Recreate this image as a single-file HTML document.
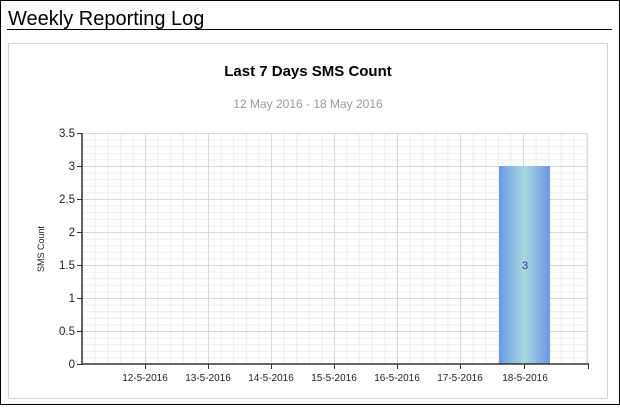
<!DOCTYPE html>
<html><head><style>
html,body{margin:0;padding:0;}
body{width:620px;height:405px;overflow:hidden;background:#fff;font-family:"Liberation Sans",Arial,sans-serif;}
</style></head><body>
<svg width="620" height="405" xmlns="http://www.w3.org/2000/svg" font-family="Liberation Sans, Arial, sans-serif">
<defs>
<pattern id="minor" x="82" y="133" width="12.6" height="6.6" patternUnits="userSpaceOnUse">
<path d="M0 0.5H12.6M0.5 0V6.6" stroke="#ececec" stroke-width="1" fill="none"/>
</pattern>
<linearGradient id="bar" x1="0" x2="1" y1="0" y2="0">
<stop offset="0" stop-color="#6a98e6"/>
<stop offset="0.5" stop-color="#a9d8e0"/>
<stop offset="1" stop-color="#6a98e6"/>
</linearGradient>
</defs>
<rect x="0.5" y="0.5" width="619" height="404" fill="#fff" stroke="#000"/>
<text x="8" y="25" font-size="20" fill="#000">Weekly Reporting Log</text>
<line x1="7" y1="29.5" x2="612" y2="29.5" stroke="#000"/>
<rect x="8.5" y="43.5" width="599" height="355" fill="#fff" stroke="#d0d0d0"/>
<text x="308" y="76" font-size="15" font-weight="bold" text-anchor="middle" fill="#000">Last 7 Days SMS Count</text>
<text x="308" y="108" font-size="12" text-anchor="middle" fill="#999">12 May 2016 - 18 May 2016</text>
<rect x="82" y="133" width="506" height="231" fill="url(#minor)"/>
<g stroke="#d8d8d8">
<line x1="82" y1="166.5" x2="588" y2="166.5"/><line x1="82" y1="199.5" x2="588" y2="199.5"/>
<line x1="82" y1="232.5" x2="588" y2="232.5"/><line x1="82" y1="265.5" x2="588" y2="265.5"/>
<line x1="82" y1="298.5" x2="588" y2="298.5"/><line x1="82" y1="331.5" x2="588" y2="331.5"/>
<line x1="82" y1="133.5" x2="588" y2="133.5"/><line x1="82" y1="232.5" x2="588" y2="232.5"/>
<line x1="145.5" y1="133" x2="145.5" y2="364"/><line x1="208.5" y1="133" x2="208.5" y2="364"/>
<line x1="271.5" y1="133" x2="271.5" y2="364"/><line x1="334.5" y1="133" x2="334.5" y2="364"/>
<line x1="397.5" y1="133" x2="397.5" y2="364"/><line x1="460.5" y1="133" x2="460.5" y2="364"/>
<line x1="523.5" y1="133" x2="523.5" y2="364"/><line x1="587.5" y1="133" x2="587.5" y2="364"/>
</g>
<rect x="499" y="166" width="51" height="198" fill="url(#bar)"/>
<text x="525" y="269" font-size="11" text-anchor="middle" fill="#3b2a8a">3</text>
<g stroke="#333" stroke-width="1.5">
<line x1="82" y1="133" x2="82" y2="365"/>
<line x1="82" y1="364" x2="589" y2="364"/>
</g>
<g stroke="#333">
<line x1="77" y1="133.5" x2="82" y2="133.5"/><line x1="77" y1="166.5" x2="82" y2="166.5"/>
<line x1="77" y1="199.5" x2="82" y2="199.5"/><line x1="77" y1="232.5" x2="82" y2="232.5"/>
<line x1="77" y1="265.5" x2="82" y2="265.5"/><line x1="77" y1="298.5" x2="82" y2="298.5"/>
<line x1="77" y1="331.5" x2="82" y2="331.5"/><line x1="77" y1="364.5" x2="82" y2="364.5"/>
<line x1="145.5" y1="364" x2="145.5" y2="369"/><line x1="208.5" y1="364" x2="208.5" y2="369"/>
<line x1="271.5" y1="364" x2="271.5" y2="369"/><line x1="334.5" y1="364" x2="334.5" y2="369"/>
<line x1="397.5" y1="364" x2="397.5" y2="369"/><line x1="460.5" y1="364" x2="460.5" y2="369"/>
<line x1="524.5" y1="364" x2="524.5" y2="369"/><line x1="588.5" y1="364" x2="588.5" y2="369"/>
</g>
<g font-size="11.5" fill="#222" text-anchor="end">
<text x="75" y="137">3.5</text><text x="75" y="170">3</text><text x="75" y="203">2.5</text>
<text x="75" y="236">2</text><text x="75" y="269">1.5</text><text x="75" y="302">1</text>
<text x="75" y="335">0.5</text><text x="75" y="368">0</text>
</g>
<g font-size="10" fill="#222" text-anchor="middle">
<text x="145" y="381">12-5-2016</text><text x="208" y="381">13-5-2016</text>
<text x="271" y="381">14-5-2016</text><text x="334" y="381">15-5-2016</text>
<text x="397" y="381">16-5-2016</text><text x="460" y="381">17-5-2016</text>
<text x="525" y="381">18-5-2016</text>
</g>
<text transform="translate(44,249) rotate(-90)" font-size="9" fill="#222" text-anchor="middle">SMS Count</text>
</svg>
</body></html>
